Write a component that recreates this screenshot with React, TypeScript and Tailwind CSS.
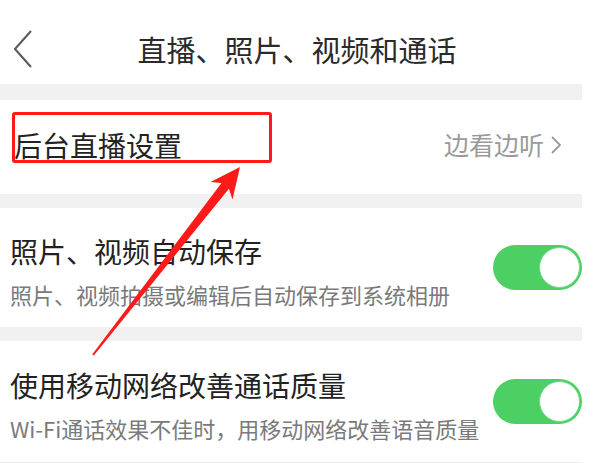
import React from "react";

function Toggle() {
  return (
    <div className="flex h-[45px] w-[89px] shrink-0 items-center justify-end rounded-full bg-[#4ccf63] p-[2px]">
      <div className="h-[41px] w-[41px] rounded-full border border-[#6fd985] bg-white" />
    </div>
  );
}

function Band() {
  return <div className="mr-[18px] h-[14px] bg-[#f1f1f1]" />;
}

export default function App() {
  const rows = [
    {
      title: "照片、视频自动保存",
      desc: "照片、视频拍摄或编辑后自动保存到系统相册",
      h: "h-[119px]",
    },
    {
      title: "使用移动网络改善通话质量",
      desc: "Wi-Fi通话效果不佳时，用移动网络改善语音质量",
      h: "h-[121px]",
    },
  ];

  return (
    <div
      className="relative h-[465px] w-[600px] overflow-hidden bg-white"
      style={{ fontFamily: '"Noto Sans CJK SC", "Noto Sans", sans-serif' }}
    >
      {/* header */}
      <div className="flex h-[84px] items-center pt-[14px]">
        <div className="flex w-[34px] justify-end">
          <svg width="20" height="40" viewBox="0 0 20 40" fill="none">
            <path d="M17 2 L1 20 L17 38" stroke="#5a5a5a" strokeWidth="2" />
          </svg>
        </div>
        <div className="flex-1 text-center text-[29px] leading-none text-[#2a2a2a]">
          直播、照片、视频和通话
        </div>
        <div className="w-[40px]" />
      </div>

      <div className="mr-[18px] h-[16px] bg-[#f1f1f1]" />

      {/* background live setting */}
      <div className="flex h-[94px] items-center justify-between pb-[5px] pl-[14px] pr-[38px]">
        <span className="text-[28px] leading-none text-[#222]">后台直播设置</span>
        <span className="flex items-center gap-[6px] text-[25px] leading-none text-[#9a9a9a]">
          边看边听
          <svg width="12" height="20" viewBox="0 0 12 20" fill="none">
            <path d="M2 2 L10 10 L2 18" stroke="#9a9a9a" strokeWidth="1.8" />
          </svg>
        </span>
      </div>

      {rows.map((r, i) => (
        <div key={i}>
          <Band />
          <div className={`flex items-center justify-between pl-[10px] pr-[18px] ${r.h}`}>
            <div className="flex flex-col pt-[6px]">
              <span className="text-[28px] leading-[32px] text-[#222]">{r.title}</span>
              <span className="mt-[14px] text-[22px] leading-[26px] text-[#7a7a7a]">{r.desc}</span>
            </div>
            <Toggle />
          </div>
        </div>
      ))}

      <div className="absolute bottom-[2px] left-0 h-px w-[582px] bg-[#ececec]" />

      {/* annotation box */}
      <div className="absolute left-[12px] top-[112px] h-[51px] w-[260px] rounded-[3px] border-[3px] border-[#ff1a1a]" />

      {/* annotation arrow */}
      <svg className="absolute left-0 top-0" width="600" height="465" viewBox="0 0 600 465">
        <polygon
          points="240,167 232.5,199.5 228.9,188.8 93.8,355.6 92.2,354.4 221.5,183 210.5,182"
          fill="#ff1a1a"
        />
      </svg>
    </div>
  );
}
